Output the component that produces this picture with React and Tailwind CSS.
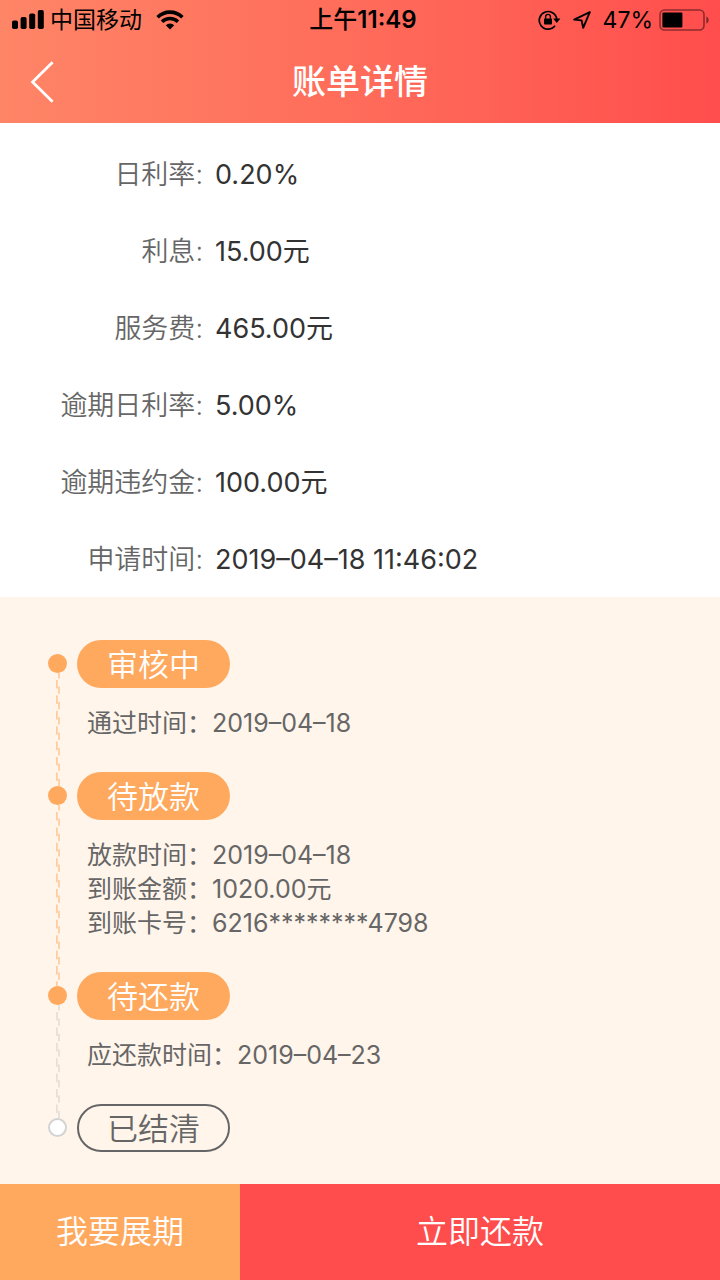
const details = [
  { label: "日利率", value: "0.20%" },
  { label: "利息", value: "15.00元" },
  { label: "服务费", value: "465.00元" },
  { label: "逾期日利率", value: "5.00%" },
  { label: "逾期违约金", value: "100.00元" },
  { label: "申请时间", value: "2019–04–18 11:46:02" },
];

const steps = [
  {
    title: "审核中",
    done: true,
    line: "text-[#ffc593]",
    rows: ["通过时间：2019–04–18"],
  },
  {
    title: "待放款",
    done: true,
    line: "text-[#ffc593]",
    rows: [
      "放款时间：2019–04–18",
      "到账金额：1020.00元",
      "到账卡号：6216********4798",
    ],
  },
  {
    title: "待还款",
    done: true,
    line: "text-[#e2dcd7]",
    rows: ["应还款时间：2019–04–23"],
  },
  { title: "已结清", done: false, line: null, rows: [] },
];

function SignalIcon() {
  return (
    <svg width="32" height="20" viewBox="0 0 32 20" fill="#000">
      <rect x="0" y="10.5" width="6" height="8.5" rx="1.8" />
      <rect x="8.6" y="7" width="6" height="12" rx="1.8" />
      <rect x="17.2" y="3.5" width="6" height="15.5" rx="1.8" />
      <rect x="25.8" y="0" width="6" height="19" rx="1.8" />
    </svg>
  );
}

function WifiIcon() {
  return (
    <svg width="28" height="20" viewBox="0 0 28 20" fill="none" stroke="#000">
      <path d="M1.6 7.2a17.6 17.6 0 0 1 24.8 0" strokeWidth="3.6" />
      <path d="M6 11.8a11.4 11.4 0 0 1 16 0" strokeWidth="3.4" />
      <path d="M14 19.4l-4.2-4.1a6 6 0 0 1 8.4 0z" fill="#000" stroke="none" />
    </svg>
  );
}

function RotationLockIcon() {
  return (
    <svg width="23" height="20" viewBox="0 0 23 20" fill="none" stroke="#000">
      <path d="M17 15.8a8.8 8.8 0 1 1 1.8-6.6" strokeWidth="1.7" />
      <path d="M15.2 8.6h7.2l-3.6 4.4z" fill="#000" stroke="none" />
      <rect x="6" y="8.6" width="8" height="6" rx="0.8" fill="#000" stroke="none" />
      <path d="M7.6 9V6.8a2.4 2.4 0 0 1 4.8 0V9" strokeWidth="1.4" />
    </svg>
  );
}

function LocationIcon() {
  return (
    <svg width="18" height="18" viewBox="0 0 18 18" fill="none" stroke="#000">
      <path
        d="M16.8 1.2L1.2 8.6l7.4.8 1.6 7.4z"
        strokeWidth="1.9"
        strokeLinejoin="round"
      />
    </svg>
  );
}

function BatteryIcon() {
  return (
    <svg width="51" height="22" viewBox="0 0 51 22">
      <rect
        x="1"
        y="1"
        width="44"
        height="20"
        rx="4.5"
        fill="none"
        stroke="#000"
        strokeOpacity="0.45"
        strokeWidth="1.6"
      />
      <rect x="3.4" y="3.4" width="20" height="15.2" rx="1" fill="#000" />
      <path d="M47.4 7.4c3 1.4 3 5.8 0 7.2z" fill="#000" fillOpacity="0.5" />
    </svg>
  );
}

function StatusBar() {
  return (
    <div className="grid grid-cols-3 items-center h-10 pl-3 pr-2.5 text-[23px] leading-10 text-black">
      <div className="flex items-center gap-1.5">
        <SignalIcon />
        <span>中国移动</span>
        <span className="ml-2">
          <WifiIcon />
        </span>
      </div>
      <div className="pl-1 text-center text-[24px] font-medium">
        上午<span className="font-semibold">11:49</span>
      </div>
      <div className="flex items-center justify-end">
        <RotationLockIcon />
        <span className="ml-3">
          <LocationIcon />
        </span>
        <span className="ml-3">47%</span>
        <span className="ml-1.5">
          <BatteryIcon />
        </span>
      </div>
    </div>
  );
}

// Two offset dashed strokes, gives the broken zigzag look
function StepLine({ className }) {
  return (
    <svg className={`w-1 h-0 grow -mb-3.5 ${className}`} stroke="currentColor">
      <line x1="0.9" y1="7" x2="0.9" y2="100%" strokeWidth="1.5" strokeDasharray="8.6 6.8" />
      <line x1="3" y1="-2" x2="3" y2="100%" strokeWidth="1.5" strokeDasharray="7.4 8" />
    </svg>
  );
}

function Step({ step }) {
  return (
    <li className="flex gap-2.5">
      <div className="flex flex-col items-center w-[19px] pt-3.5">
        <span
          className={`w-[19px] h-[19px] shrink-0 rounded-full ${
            step.done ? "bg-[#ffa95f]" : "bg-white border-2 border-[#d3d3d3]"
          }`}
        />
        {step.line && <StepLine className={step.line} />}
      </div>
      <div className={step.line ? "pb-8" : ""}>
        <h2
          className={`flex items-center justify-center w-[153px] h-12 rounded-full text-[31px] leading-none font-[350] ${
            step.done
              ? "bg-[#ffa95f] text-white"
              : "border-2 border-[#666] text-[#666]"
          }`}
        >
          {step.title}
        </h2>
        {step.rows.length > 0 && (
          <div className="pt-[18px] pl-2.5 text-[25px] leading-[34px] text-[#666]">
            {step.rows.map((row) => (
              <p key={row}>{row}</p>
            ))}
          </div>
        )}
      </div>
    </li>
  );
}

export default function App() {
  return (
    <div className="flex flex-col min-h-screen bg-white font-normal font-['Inter','Noto_Sans_CJK_SC',sans-serif]">
      <header className="bg-linear-to-r from-[#ff8567] to-[#ff4d4d]">
        <StatusBar />
        <div className="grid grid-cols-[80px_1fr_80px] items-center h-[83px]">
          <button type="button" aria-label="返回" className="pl-[30px]">
            <svg width="24" height="42" viewBox="0 0 24 42" fill="none" stroke="#fff">
              <path d="M22.6 1.2L2.6 21l20 19.8" strokeWidth="2.8" />
            </svg>
          </button>
          <h1 className="text-center text-[34px] leading-none font-medium text-white">
            账单详情
          </h1>
        </div>
      </header>

      <dl className="flex flex-col gap-[37px] pt-8 pb-[17px] text-[27px] leading-10">
        {details.map((item) => (
          <div key={item.label} className="flex gap-3">
            <dt className="w-[203px] text-right font-[350] text-[#666]">
              {item.label}:
            </dt>
            <dd className="text-[#333]">{item.value}</dd>
          </div>
        ))}
      </dl>

      <ol className="flex-1 pt-[43px] pb-8 pl-12 pr-6 bg-[#fff5eb]">
        {steps.map((step) => (
          <Step key={step.title} step={step} />
        ))}
      </ol>

      <footer className="grid grid-cols-3 h-24 text-[32px] font-[350] text-white">
        <button type="button" className="bg-[#ffa95f]">
          我要展期
        </button>
        <button type="button" className="col-span-2 bg-[#ff4d4d]">
          立即还款
        </button>
      </footer>
    </div>
  );
}
